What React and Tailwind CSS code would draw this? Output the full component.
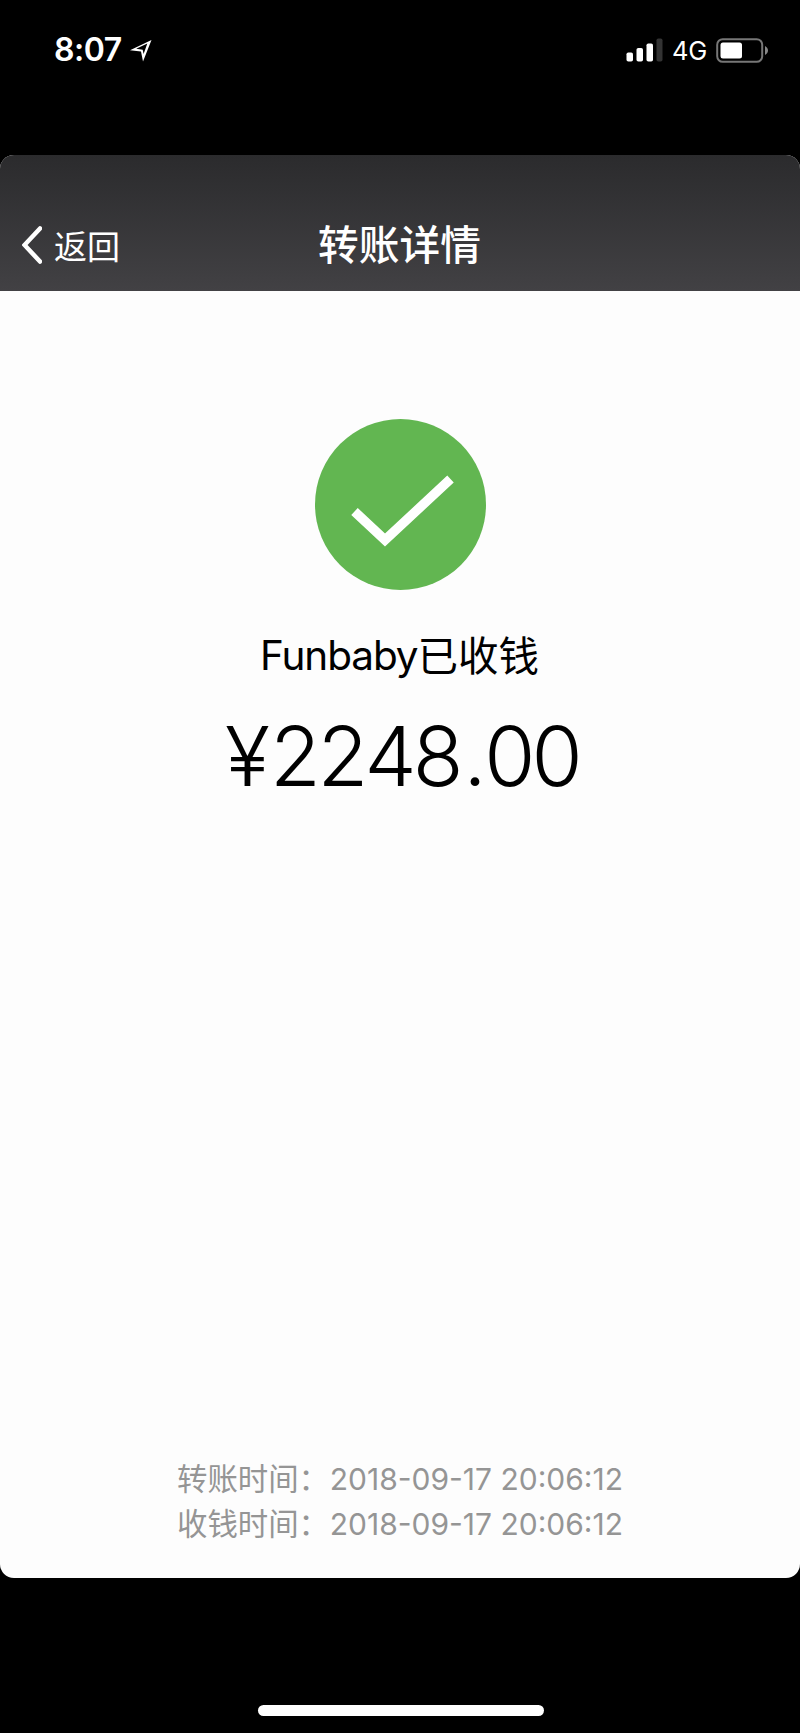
const rows = [
  { label: "转账时间：", value: "2018-09-17 20:06:12" },
  { label: "收钱时间：", value: "2018-09-17 20:06:12" },
];

function StatusBar() {
  return (
    <div className="flex h-[155px] items-start justify-between pt-[30px] pr-[30px] pl-[54px]">
      <div className="flex h-10 items-center">
        <span className="text-[32px] leading-10 font-semibold tracking-[-0.5px]">8:07</span>
        <svg className="ml-[7px] h-[24px] w-[24px]" viewBox="0 0 24 24">
          <path
            fillRule="evenodd"
            fill="white"
            d="M22.5 2 14 23.5 12 13.6 1 12.2ZM18.3 5.6 7.2 10.7 13.7 11.7 14.6 16Z"
          />
        </svg>
      </div>
      <div className="flex h-10 items-center">
        <svg className="h-[24px] w-[37px]" viewBox="0 0 37 24">
          <rect x="0.5" y="14.5" width="6.5" height="9" rx="1.8" fill="white" />
          <rect x="10.5" y="10" width="6.5" height="13.5" rx="1.8" fill="white" />
          <rect x="20.5" y="5.5" width="6.5" height="18" rx="1.8" fill="white" />
          <rect x="30.5" y="0.5" width="6" height="23" rx="1.8" fill="#333333" />
        </svg>
        <span className="ml-[9px] pt-px text-[25.5px] leading-10 tracking-[-0.3px]">4G</span>
        <svg className="ml-[9px] mr-px h-[25px] w-[53px]" viewBox="0 0 53 25">
          <rect x="1.2" y="1.2" width="45" height="22.6" rx="5.5" fill="none" stroke="#777777" strokeWidth="2" />
          <rect x="4.5" y="4.5" width="21.5" height="16" rx="2.5" fill="white" />
          <path d="M49 8C53 10 53 15 49 17Z" fill="#888888" />
        </svg>
      </div>
    </div>
  );
}

export default function App() {
  return (
    <div className="flex h-[1733px] w-[800px] flex-col bg-black font-['Inter','Noto_Sans_CJK_SC',sans-serif] text-white">
      <StatusBar />
      <main className="flex h-[1423px] flex-col overflow-hidden rounded-[14px] bg-[#fdfdfd] text-black">
        <header className="grid h-[136px] grid-cols-3 items-start bg-linear-to-b from-[#2b2b2d] to-[#424144] pt-[64px] text-white">
          <button className="flex h-[52px] items-center pl-[22px] text-[33px] leading-[52px] font-normal">
            <svg className="mr-[12px] h-[38px] w-[20px]" viewBox="0 0 20 38" fill="none">
              <path d="M18 2.5 2.5 19 18 35.5" stroke="white" strokeWidth="4.5" strokeLinecap="round" />
            </svg>
            <span className="pt-[3px]">返回</span>
          </button>
          <h1 className="-ml-px pt-px text-center text-[40.7px] leading-[52px] font-medium">转账详情</h1>
        </header>
        <section className="flex flex-col items-center pt-[128px]">
          <svg className="h-[171px] w-[171px]" viewBox="0 0 171 171">
            <circle cx="85.5" cy="85.5" r="85.5" fill="#62b651" />
            <path d="M39.5 92.5 70 121 135.5 60" fill="none" stroke="white" strokeWidth="9.5" />
          </svg>
          <p className="mt-[39px] -ml-px flex h-[54px] items-center text-[40.5px] leading-[54px]">
            <span className="font-[370] tracking-[-1.1px]">Funbaby</span>
            <span className="pt-px">已收钱</span>
          </p>
          <p className="mt-[23px] ml-[3px] text-[83px] leading-[100px] font-light tracking-[-6.2px] tabular-nums">
            <span className="mr-[5px]">¥</span>2248<span className="mr-[3px] ml-[5px]">.</span>00
          </p>
        </section>
        <footer className="mt-auto flex flex-col items-center pb-[31px] text-[30px] leading-[45px] text-[#959595]">
          {rows.map((row) => (
            <div key={row.label} className="flex h-[45px] w-[446px] justify-between">
              <span className="text-[30.4px]">{row.label}</span>
              <span className="-ml-4 font-[370]">{row.value}</span>
            </div>
          ))}
        </footer>
      </main>
      <div className="mt-auto mb-[17px] flex justify-center pl-px">
        <div className="h-[11px] w-[286px] rounded-full bg-white" />
      </div>
    </div>
  );
}
